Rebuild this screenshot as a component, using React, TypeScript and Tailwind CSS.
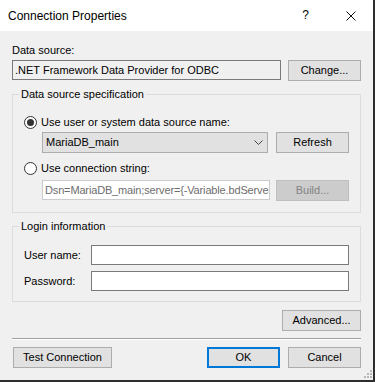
import React from 'react';

type BtnProps = {
  children: React.ReactNode;
  width: string;
  disabled?: boolean;
  primary?: boolean;
};

// WinForms-ish push button
const Btn: React.FC<BtnProps> = ({ children, width, disabled, primary }) => {
  let cls = 'bg-[#e1e1e1] border border-[#adadad] text-black';
  if (disabled) cls = 'bg-[#cccccc] border border-[#bfbfbf] text-[#838383]';
  if (primary) cls = 'bg-[#e1e1e1] border-2 border-[#0078d7] text-black';
  return (
    <button type="button" className={`${width} h-[21px] shrink-0 flex items-center justify-center ${cls}`}>
      {children}
    </button>
  );
};

const Radio: React.FC<{ checked?: boolean; label: string }> = ({ checked, label }) => (
  <label className="flex items-center h-[13px]">
    <span className="w-[13px] h-[13px] rounded-full border border-[#333333] bg-white flex items-center justify-center shrink-0">
      {checked && <span className="w-[7px] h-[7px] rounded-full bg-[#333333]" />}
    </span>
    <span className="ml-[4px]">{label}</span>
  </label>
);

const Group: React.FC<{ title: string; children: React.ReactNode }> = ({ title, children }) => (
  <fieldset className="border border-[#dcdcdc]">
    <legend className="ml-[6px] px-[2px] leading-[13px]">{title}</legend>
    {children}
  </fieldset>
);

export default function App() {
  return (
    <div className="w-[375px] h-[382px] bg-[#2e2e2e] font-['Liberation_Sans',Arial,sans-serif] text-[11px] leading-[13px] text-black">
      <div className="relative w-[373px] h-[380px] bg-[#f0f0f0]">
        {/* title bar */}
        <div className="h-[31px] bg-white flex items-center">
          <span className="pl-[8px] flex-1 text-[12px] leading-[14px] pt-[1px]">Connection Properties</span>
          <span className="w-[45px] h-[31px] flex items-center justify-center text-[12px]">?</span>
          <span className="w-[45px] h-[31px] flex items-center justify-center">
            <svg width="10" height="10" viewBox="0 0 10 10">
              <path d="M0.5 0.5 L9.5 9.5 M9.5 0.5 L0.5 9.5" stroke="#111" strokeWidth="1" />
            </svg>
          </span>
        </div>

        <div className="px-[12px] flex flex-col">
          <div className="mt-[13px]">Data source:</div>
          <div className="mt-[3px] flex items-start justify-between">
            <div className="w-[269px] h-[20px] border border-[#7a7a7a] bg-[#f0f0f0] pl-[2px] flex items-center">
              .NET Framework Data Provider for ODBC
            </div>
            <Btn width="w-[73px]">Change...</Btn>
          </div>

          <div className="mt-[7px]">
            <Group title="Data source specification">
              <div className="pl-[11px] pr-[11px] pt-[15px] pb-[11px]">
                <Radio checked label="Use user or system data source name:" />
                <div className="mt-[3px] ml-[18px] flex items-start justify-between">
                  <div className="w-[226px] h-[21px] bg-[#e1e1e1] border border-[#adadad] flex items-center pl-[3px] pr-[4px]">
                    <span className="flex-1">MariaDB_main</span>
                    <svg width="9" height="5" viewBox="0 0 9 5">
                      <path d="M0.5 0.5 L4.5 4.5 L8.5 0.5" fill="none" stroke="#444" strokeWidth="1" />
                    </svg>
                  </div>
                  <Btn width="w-[73px]">Refresh</Btn>
                </div>
                <div className="mt-[9px]">
                  <Radio label="Use connection string:" />
                </div>
                <div className="mt-[5px] ml-[18px] flex items-start justify-between">
                  <div className="w-[228px] h-[20px] bg-white border border-[#cccccc] text-[#6d6d6d] pl-[2px] flex items-center overflow-hidden whitespace-nowrap tracking-[-0.15px]">
                    Dsn=MariaDB_main;server={'{'}-Variable.bdServer
                  </div>
                  <Btn width="w-[73px]" disabled>Build...</Btn>
                </div>
              </div>
            </Group>
          </div>

          <div className="mt-[7px]">
            <Group title="Login information">
              <div className="pl-[11px] pr-[11px] pt-[12px] pb-[10px] flex flex-col gap-[6px]">
                <div className="flex items-center">
                  <span className="w-[67px]">User name:</span>
                  <div className="flex-1 h-[20px] bg-white border border-[#7a7a7a]" />
                </div>
                <div className="flex items-center">
                  <span className="w-[67px]">Password:</span>
                  <div className="flex-1 h-[20px] bg-white border border-[#7a7a7a]" />
                </div>
              </div>
            </Group>
          </div>

          <div className="mt-[8px] flex justify-end">
            <Btn width="w-[79px]">Advanced...</Btn>
          </div>

          <div className="mt-[7px] border-t border-[#a0a0a0] border-b border-b-white" />

          <div className="mt-[7px] flex items-start">
            <div className="ml-[1px]">
              <Btn width="w-[99px]">Test Connection</Btn>
            </div>
            <div className="ml-auto flex gap-[8px]">
              <Btn width="w-[73px]" primary>OK</Btn>
              <Btn width="w-[73px]">Cancel</Btn>
            </div>
          </div>
        </div>

        {/* size grip */}
        <svg className="absolute right-[1px] bottom-[2px]" width="8" height="8" viewBox="0 0 8 8">
          <rect x="6" y="0" width="2" height="2" fill="#b8b8b8" />
          <rect x="3" y="3" width="2" height="2" fill="#b8b8b8" />
          <rect x="6" y="3" width="2" height="2" fill="#b8b8b8" />
          <rect x="0" y="6" width="2" height="2" fill="#b8b8b8" />
          <rect x="3" y="6" width="2" height="2" fill="#b8b8b8" />
          <rect x="6" y="6" width="2" height="2" fill="#b8b8b8" />
        </svg>
      </div>
    </div>
  );
}
